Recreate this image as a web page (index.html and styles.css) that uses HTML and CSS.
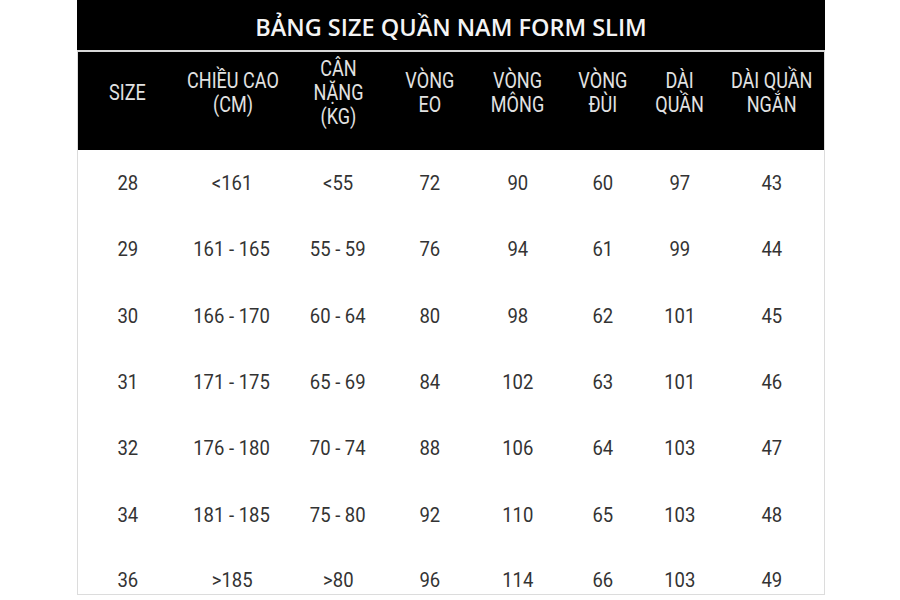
FILE: index.html
```html
<!DOCTYPE html>
<html lang="vi">
<head>
<meta charset="utf-8">
<title>Bảng size quần nam form slim</title>
<link rel="stylesheet" href="styles.css">
</head>
<body>
<div class="chart">
  <div class="title">BẢNG SIZE QUẦN NAM FORM SLIM</div>
  <table class="sizes">
    <colgroup>
      <col class="w1"><col class="w2"><col class="w3"><col class="w4"><col class="w5"><col class="w6"><col class="w7"><col class="w8">
    </colgroup>
    <thead>
      <tr>
        <th><span class="n">SIZE</span></th>
        <th><span class="n">CHIỀU CAO<br>(CM)</span></th>
        <th><span class="n">CÂN<br>NẶNG<br>(KG)</span></th>
        <th><span class="n">VÒNG<br>EO</span></th>
        <th><span class="n">VÒNG<br>MÔNG</span></th>
        <th><span class="n">VÒNG<br>ĐÙI</span></th>
        <th><span class="n">DÀI<br>QUẦN</span></th>
        <th><span class="n">DÀI QUẦN<br>NGẮN</span></th>
      </tr>
    </thead>
    <tbody>
      <tr><td><span class="n">28</span></td><td><span class="n">&lt;161</span></td><td><span class="n">&lt;55</span></td><td><span class="n">72</span></td><td><span class="n">90</span></td><td><span class="n">60</span></td><td><span class="n">97</span></td><td><span class="n">43</span></td></tr>
      <tr><td><span class="n">29</span></td><td><span class="n">161 - 165</span></td><td><span class="n">55 - 59</span></td><td><span class="n">76</span></td><td><span class="n">94</span></td><td><span class="n">61</span></td><td><span class="n">99</span></td><td><span class="n">44</span></td></tr>
      <tr><td><span class="n">30</span></td><td><span class="n">166 - 170</span></td><td><span class="n">60 - 64</span></td><td><span class="n">80</span></td><td><span class="n">98</span></td><td><span class="n">62</span></td><td><span class="n">101</span></td><td><span class="n">45</span></td></tr>
      <tr><td><span class="n">31</span></td><td><span class="n">171 - 175</span></td><td><span class="n">65 - 69</span></td><td><span class="n">84</span></td><td><span class="n">102</span></td><td><span class="n">63</span></td><td><span class="n">101</span></td><td><span class="n">46</span></td></tr>
      <tr><td><span class="n">32</span></td><td><span class="n">176 - 180</span></td><td><span class="n">70 - 74</span></td><td><span class="n">88</span></td><td><span class="n">106</span></td><td><span class="n">64</span></td><td><span class="n">103</span></td><td><span class="n">47</span></td></tr>
      <tr><td><span class="n">34</span></td><td><span class="n">181 - 185</span></td><td><span class="n">75 - 80</span></td><td><span class="n">92</span></td><td><span class="n">110</span></td><td><span class="n">65</span></td><td><span class="n">103</span></td><td><span class="n">48</span></td></tr>
      <tr class="last"><td><span class="n">36</span></td><td><span class="n">&gt;185</span></td><td><span class="n">&gt;80</span></td><td><span class="n">96</span></td><td><span class="n">114</span></td><td><span class="n">66</span></td><td><span class="n">103</span></td><td><span class="n">49</span></td></tr>
    </tbody>
  </table>
</div>
</body>
</html>
```
FILE: styles.css
```css
html, body {
  margin: 0;
  padding: 0;
  background: #ffffff;
}
body {
  font-family: Roboto, "Liberation Sans", sans-serif;
}
.chart {
  width: 748px;
  margin: 0 0 0 77px;
  border-left: 1px solid #dcdcdc;
  border-right: 1px solid #dcdcdc;
  border-bottom: 1px solid #dcdcdc;
  box-sizing: border-box;
}
.title {
  height: 50px;
  background: #000;
  color: #f4f4f4;
  font-family: "Open Sans", sans-serif;
  font-weight: 600;
  font-size: 23.5px;
  line-height: 54px;
  text-align: center;
  border-bottom: 2px solid #d8d8d8;
  margin: 0 -1px;
}
.sizes {
  width: 100%;
  border-collapse: collapse;
  table-layout: fixed;
}
.w1 { width: 99px; }
.w2 { width: 110px; }
.w3 { width: 102px; }
.w4 { width: 82px; }
.w5 { width: 94px; }
.w6 { width: 76px; }
.w7 { width: 78px; }
.w8 { width: 105px; }
.sizes thead tr {
  height: 98px;
}
.sizes th {
  background: #000;
  color: #e2e2e2;
  padding: 0 0 16px;
  font-weight: 400;
  font-size: 22px;
  line-height: 24px;
  text-align: center;
  vertical-align: middle;
}
.sizes th .n {
  transform: scaleX(0.82);
}
.sizes tbody tr {
  height: 66.3px;
}
.sizes td {
  padding: 0;
  color: #333;
  font-size: 21px;
  text-align: center;
  vertical-align: middle;
}
.n {
  display: inline-block;
  transform: scaleX(0.88);
  white-space: nowrap;
}
.sizes tbody tr.last {
  height: 46px;
}
.sizes tr.last td {
  vertical-align: bottom;
  padding-bottom: 2px;
}
```
